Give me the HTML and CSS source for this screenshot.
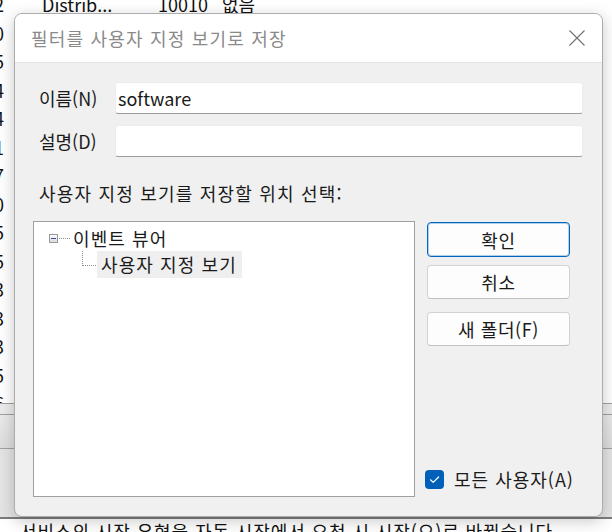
FILE: index.html
```html
<!DOCTYPE html>
<html lang="ko">
<head>
    <meta charset="UTF-8">
    <title>필터를 사용자 지정 보기로 저장</title>
    <link rel="stylesheet" href="styles.css">
</head>
<body>
    <div id="backdrop">
        <div id="event-list">
            <div class="row"><span class="c-time">3:12:02</span><span class="c-src">Distrib...</span><span class="c-id">10010</span><span class="c-cat">없음</span></div>
            <div class="row"><span class="c-time">3:11:50</span><span class="c-src">Service...</span><span class="c-id">7040</span><span class="c-cat">없음</span></div>
            <div class="row"><span class="c-time">3:11:45</span><span class="c-src">Service...</span><span class="c-id">7040</span><span class="c-cat">없음</span></div>
            <div class="row"><span class="c-time">3:10:14</span><span class="c-src">Kernel...</span><span class="c-id">16</span><span class="c-cat">없음</span></div>
            <div class="row"><span class="c-time">3:10:14</span><span class="c-src">Kernel...</span><span class="c-id">16</span><span class="c-cat">없음</span></div>
            <div class="row"><span class="c-time">3:09:31</span><span class="c-src">DCOM</span><span class="c-id">10016</span><span class="c-cat">없음</span></div>
            <div class="row"><span class="c-time">3:08:27</span><span class="c-src">DCOM</span><span class="c-id">10016</span><span class="c-cat">없음</span></div>
            <div class="row"><span class="c-time">3:08:20</span><span class="c-src">Service...</span><span class="c-id">7040</span><span class="c-cat">없음</span></div>
            <div class="row"><span class="c-time">3:07:55</span><span class="c-src">Service...</span><span class="c-id">7040</span><span class="c-cat">없음</span></div>
            <div class="row"><span class="c-time">3:07:45</span><span class="c-src">Distrib...</span><span class="c-id">10010</span><span class="c-cat">없음</span></div>
            <div class="row"><span class="c-time">3:06:13</span><span class="c-src">DCOM</span><span class="c-id">10016</span><span class="c-cat">없음</span></div>
            <div class="row"><span class="c-time">3:05:23</span><span class="c-src">DCOM</span><span class="c-id">10016</span><span class="c-cat">없음</span></div>
            <div class="row"><span class="c-time">3:05:03</span><span class="c-src">Service...</span><span class="c-id">7040</span><span class="c-cat">없음</span></div>
            <div class="row"><span class="c-time">3:04:15</span><span class="c-src">Service...</span><span class="c-id">7040</span><span class="c-cat">없음</span></div>
            <div class="row"><span class="c-time">3:03:36</span><span class="c-src">Kernel...</span><span class="c-id">16</span><span class="c-cat">없음</span></div>
        </div>
        <div id="splitter"></div>
        <div id="tabs"></div>
        <div id="detail-panel"></div>
        <div id="detail-text">서비스의 시작 유형을 자동 시작에서 요청 시 시작(으)로 바꿨습니다.</div>
    </div>

    <div id="dialog">
        <div class="titlebar">
            <div class="title">필터를 사용자 지정 보기로 저장</div>
            <svg class="close" width="16" height="16" viewBox="0 0 16 16">
                <path d="M0.5 0.5 L15.5 15.5 M15.5 0.5 L0.5 15.5" stroke="#707070" stroke-width="1.1" fill="none"/>
            </svg>
        </div>
        <div class="body">
            <div class="field">
                <label>이름(N)</label>
                <div class="input">software</div>
            </div>
            <div class="field">
                <label>설명(D)</label>
                <div class="input"></div>
            </div>
            <div class="location-label">사용자 지정 보기를 저장할 위치 선택:</div>
            <div class="picker">
                <div class="tree">
                    <div class="node-root">
                        <svg class="expander" width="9" height="9" viewBox="0 0 9 9">
                            <defs>
                                <linearGradient id="exp-bg" x1="0" y1="0" x2="0" y2="1">
                                    <stop offset="0" stop-color="#ffffff"/>
                                    <stop offset="1" stop-color="#d8d8d8"/>
                                </linearGradient>
                            </defs>
                            <rect x="0.5" y="0.5" width="8" height="8" fill="url(#exp-bg)" stroke="#9a9a9a"/>
                            <path d="M2 4.5 H7" stroke="#3b4f9a" stroke-width="1"/>
                        </svg>
                        <span class="dots"></span>
                        <span class="node-text">이벤트 뷰어</span>
                    </div>
                    <div class="node-child">
                        <span class="branch"></span>
                        <span class="node-text selected">사용자 지정 보기</span>
                    </div>
                </div>
                <div class="side">
                    <div class="btn default">확인</div>
                    <div class="btn">취소</div>
                    <div class="btn folder">새 폴더(F)</div>
                    <div class="check-row">
                        <svg class="checkbox" width="19" height="19" viewBox="0 0 19 19">
                            <rect x="0" y="0" width="19" height="19" rx="4" fill="#005fb8"/>
                            <path d="M5.5 9.8 L8.2 12.4 L13.6 7" stroke="#ffffff" stroke-width="1.2" fill="none" stroke-linecap="round" stroke-linejoin="round"/>
                        </svg>
                        <span class="check-label">모든 사용자(A)</span>
                    </div>
                </div>
            </div>
        </div>
    </div>
</body>
</html>
```

FILE: styles.css
```css
html, body {
    margin: 0;
    padding: 0;
}
body {
    width: 612px;
    height: 532px;
    overflow: hidden;
    background-color: white;
    font-family: "Noto Sans CJK KR", sans-serif;
    font-size: 18px;
    color: #1a1a1a;
    position: relative;
}

/* window behind the dialog */
#event-list {
    margin-top: -10px;
    height: 413px;
    overflow: hidden;
}
.row {
    display: grid;
    grid-template-columns: 88px 116px 64px 1fr;
    height: 28.5px;
    line-height: 28.5px;
    margin-left: -46px;
    white-space: nowrap;
    color: #111;
}
.c-time {
    display: flex;
    justify-content: flex-end;
    overflow: hidden;
    margin-right: 38px;
}
#splitter {
    height: 12px;
    box-sizing: border-box;
    border-top: 1px solid #a0a0a0;
    border-bottom: 1px solid #a0a0a0;
    background-color: #ebebeb;
}
#tabs {
    height: 34px;
    box-sizing: border-box;
    border-bottom: 1px solid #a0a0a0;
    background: linear-gradient(#e9e9e9, #dddddd);
}
#detail-panel {
    height: 70px;
    box-sizing: border-box;
    border-bottom: 2px solid #7c7c7c;
    background-color: #e4e4e4;
}
#detail-text {
    padding-left: 20px;
    line-height: 24px;
    white-space: nowrap;
    letter-spacing: 0.9px;
    color: #111;
}

/* dialog */
#dialog {
    position: absolute;
    left: 14px;
    top: 13px;
    width: 589px;
    height: 504px;
    box-sizing: border-box;
    border: 1px solid #acacac;
    border-radius: 8px;
    background-color: #f0f0f0;
    box-shadow: 0 4px 16px rgba(0, 0, 0, 0.22);
    overflow: hidden;
    display: flex;
    flex-direction: column;
}
.titlebar {
    height: 48px;
    flex-shrink: 0;
    background-color: white;
    border-bottom: 1px solid #e3e3e3;
    display: flex;
    align-items: center;
    justify-content: space-between;
    padding: 0 17px 0 16px;
}
.title {
    color: #8a8a8a;
    letter-spacing: 1.2px;
}
.close {
    display: block;
}
.body {
    flex-grow: 1;
    display: flex;
    flex-direction: column;
    padding: 19px 19px 19px 18px;
}
.field {
    display: flex;
    align-items: center;
    height: 32px;
}
.field + .field {
    margin-top: 11px;
}
.field label {
    width: 82px;
    padding-left: 6px;
    box-sizing: border-box;
}
.input {
    flex-grow: 1;
    height: 32px;
    box-sizing: border-box;
    background-color: white;
    border: 1px solid #ececec;
    border-bottom-color: #9c9c9c;
    border-radius: 3px;
    padding-left: 2px;
    line-height: 30px;
}
.location-label {
    margin-top: 23px;
    padding-left: 6px;
    line-height: 26px;
    letter-spacing: 1.2px;
}
.picker {
    display: flex;
    gap: 12px;
    margin-top: 15px;
    flex-grow: 1;
}
.tree {
    width: 382px;
    box-sizing: border-box;
    border: 1px solid #a0a0a0;
    background-color: white;
    padding: 3px 0 0 15px;
}
.node-root {
    display: flex;
    align-items: center;
    height: 26px;
}
.expander {
    display: block;
}
.dots {
    width: 11px;
    margin-left: 1px;
    border-top: 1px dotted #8c8c8c;
}
.node-text {
    margin-left: 3px;
    white-space: nowrap;
    letter-spacing: 1.1px;
}
.node-child {
    display: flex;
    height: 27px;
    margin-left: 33px;
}
.branch {
    width: 14px;
    height: 15px;
    box-sizing: border-box;
    border-left: 1px dotted #8c8c8c;
    border-bottom: 1px dotted #8c8c8c;
}
.node-text.selected {
    margin-left: 1px;
    padding: 0 5px 0 4px;
    line-height: 27px;
    background-color: #efefef;
}
.side {
    width: 143px;
    display: flex;
    flex-direction: column;
}
.btn {
    height: 34px;
    box-sizing: border-box;
    border: 1px solid #d3d3d3;
    border-bottom-color: #c0c0c0;
    border-radius: 4px;
    background-color: #fdfdfd;
    display: flex;
    align-items: center;
    justify-content: center;
    margin-top: 8px;
    letter-spacing: 0.6px;
}
.btn.default {
    margin-top: 1px;
    height: 35px;
    border-color: #0067c0;
    box-shadow: inset 0 0 0 1px rgba(0, 103, 192, 0.3);
}
.btn.folder {
    margin-top: 13px;
}
.check-row {
    margin-top: auto;
    margin-bottom: 5px;
    display: flex;
    align-items: center;
    gap: 10px;
    margin-left: -2px;
    white-space: nowrap;
}
.check-label {
    letter-spacing: 1px;
}
.checkbox {
    display: block;
    flex-shrink: 0;
}
```
